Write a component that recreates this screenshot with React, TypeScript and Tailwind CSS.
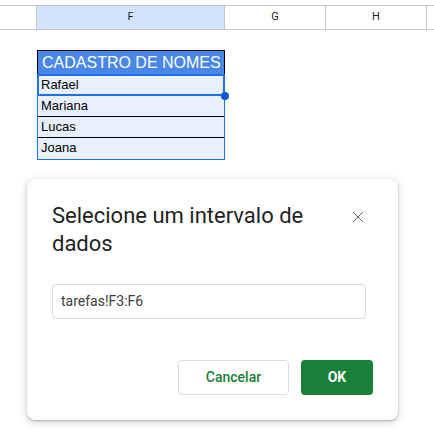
import { X } from "lucide-react";

const rows = ["Rafael", "Mariana", "Lucas", "Joana"];

const App = () => {
  return (
    <div className="w-[434px] h-[429px] bg-white overflow-hidden font-['Liberation_Sans',Arial,sans-serif]">
      {/* column headers */}
      <div className="mt-[5px] flex h-[25px] border-y border-[#c4c7c5] text-[11px] text-[#1f1f1f] font-['Roboto',sans-serif]">
        <div className="w-[37px] border-r border-[#c4c7c5]" />
        <div className="w-[188px] bg-[#d3e3fd] border-r border-[#c4c7c5] flex items-center justify-center">F</div>
        <div className="w-[101px] border-r border-[#c4c7c5] flex items-center justify-center">G</div>
        <div className="w-[101px] border-r border-[#c4c7c5] flex items-center justify-center">H</div>
      </div>

      {/* data table */}
      <div className="ml-[37px] mt-[20px] w-[188px] relative">
        <div className="h-[25px] bg-[#4a86e8] border border-black text-white text-[16px] leading-[23px] px-[4px] whitespace-nowrap">
          CADASTRO DE NOMES
        </div>
        <div className="border-x border-b border-[#1a73e8]">
          {rows.map((name, i) => (
            <div
              key={name}
              className={`h-[21px] bg-[#e8f0fe] text-[13px] leading-[20px] px-[3px] text-black ${
                i < rows.length - 1 ? "border-b border-black" : ""
              }`}
            >
              {name}
            </div>
          ))}
        </div>
        {/* selection */}
        <div className="absolute left-0 top-[24px] w-[188px] h-[22px] border-2 border-[#1a73e8] pointer-events-none" />
        <div className="absolute left-[184px] top-[42px] w-[8px] h-[8px] rounded-full bg-[#0b57d0]" />
      </div>

      {/* dialog */}
      <div className="ml-[27px] mt-[19px] w-[371px] h-[241px] bg-white rounded-[8px] shadow-[0_2px_6px_2px_rgba(60,64,67,0.15),0_1px_2px_rgba(60,64,67,0.3)] pl-[25px] pr-[25px] pt-[23px] font-['Roboto',sans-serif]">
        <div className="flex items-start justify-between">
          <h2 className="text-[22px] leading-[28px] text-[#1f1f1f] w-[270px]">
            Selecione um intervalo de dados
          </h2>
          <button className="mt-[6px] mr-[6px] w-[18px] h-[18px] flex items-center justify-center text-[#5f6368]">
            <X size={18} strokeWidth={1.3} />
          </button>
        </div>
        <div className="mt-[26px] w-[314px] h-[35px] border border-[#dadce0] rounded-[4px] px-[8px] flex items-center text-[14px] text-[#3c4043]">
          tarefas!F3:F6
        </div>
        <div className="mt-[41px] flex justify-end gap-[12px]">
          <button className="w-[111px] h-[35px] border border-[#dadce0] rounded-[4px] text-[14px] font-medium text-[#188038]">
            Cancelar
          </button>
          <button className="w-[72px] h-[35px] rounded-[4px] bg-[#188038] text-[14px] font-bold text-white">
            OK
          </button>
        </div>
      </div>
    </div>
  );
};

export default App;
